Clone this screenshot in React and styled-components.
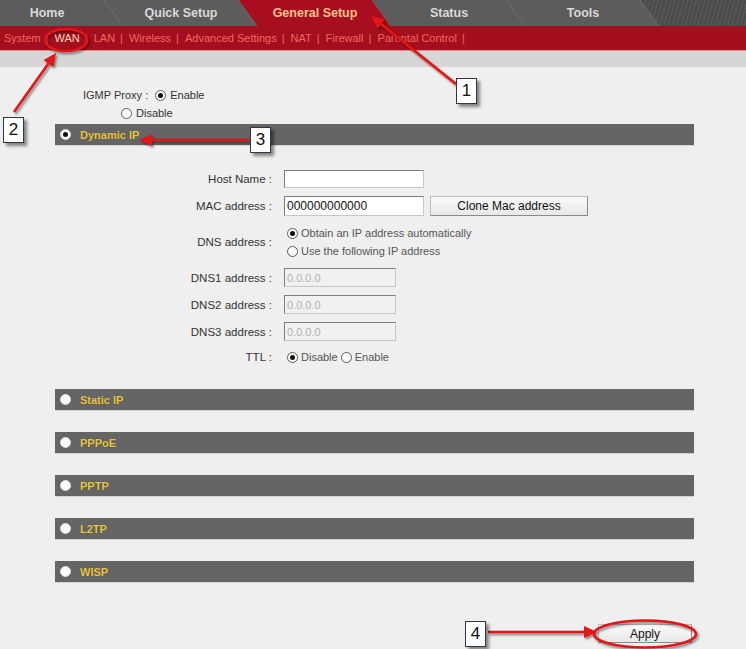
import React from "react";
import styled, { createGlobalStyle } from "styled-components";

const Global = createGlobalStyle`
  html, body { margin: 0; padding: 0; background: #efefef; }
  body { font-family: "Liberation Sans", Arial, sans-serif; }
  * { box-sizing: border-box; }
`;

const Page = styled.div`
  position: relative;
  width: 746px;
  height: 649px;
  overflow: hidden;
  background: #efefef;
  font-family: "Liberation Sans", Arial, sans-serif;
`;

const TabBar = styled.div`
  display: flex;
  height: 26px;
  background: #5c5c5c;
  overflow: hidden;
`;

const Tab = styled.div`
  position: relative;
  flex: none;
  width: 134px;
  margin-left: ${(p) => (p.$first ? "-20px" : "0")};
  display: flex;
  align-items: center;
  justify-content: center;
  font-size: 12.5px;
  font-weight: bold;
  color: ${(p) => (p.$active ? "#f4c48c" : "#d9d9d9")};
  &::before {
    content: "";
    position: absolute;
    inset: 0;
    background: ${(p) => (p.$active ? "#a90e20" : "transparent")};
    border-right: 1px solid #6e6e6e;
    transform: skewX(36deg);
  }
  span { position: relative; }
`;

const Filler = styled.div`
  position: relative;
  flex: 1;
  &::before {
    content: "";
    position: absolute;
    top: 0;
    bottom: 0;
    left: 0;
    right: -30px;
    transform: skewX(36deg);
    background: repeating-linear-gradient(135deg, #575757 0 1px, #4c4c4c 1px 3px);
  }
`;

const SubNav = styled.div`
  display: flex;
  align-items: center;
  height: 25px;
  padding-left: 4px;
  background: #a50e1f;
  border-bottom: 1px solid #e88a8a;
  font-size: 11px;
  color: #ee6a5c;
`;

const SubLink = styled.span`
  color: ${(p) => (p.$active ? "#ffd9b8" : "#ee6a5c")};
`;

const Sep = styled.span`
  padding: 0 6px 0 5px;
  color: #ee6a5c;
`;

const Band = styled.div`
  height: 16px;
  background: #d6d6d6;
`;

const Content = styled.div`
  padding-left: 55px;
  width: 694px;
`;

const Line = styled.div`
  display: flex;
  align-items: center;
  height: 18px;
  padding-left: ${(p) => p.$indent}px;
  font-size: 11px;
  color: #333;
  gap: 4px;
`;

const IgmpBlock = styled.div`
  padding-top: 19px;
  margin-bottom: 2px;
`;

const Label = styled.span`
  margin-right: 3px;
`;

const Radio = styled.span`
  flex: none;
  display: inline-flex;
  align-items: center;
  justify-content: center;
  width: 11px;
  height: 11px;
  border-radius: 50%;
  border: 1px solid ${(p) => (p.$plain ? "#dcdcdc" : "#5a5a5a")};
  background: #fff;
  &::after {
    content: "";
    width: 5px;
    height: 5px;
    border-radius: 50%;
    background: ${(p) => (p.$checked ? "#111" : "transparent")};
  }
`;

const Bar = styled.div`
  display: flex;
  align-items: center;
  gap: 9px;
  height: 22px;
  padding-left: 5px;
  background: #656565;
  border-bottom: 1px solid #d2d2d2;
  margin-top: ${(p) => p.$gap || 0}px;
`;

const BarTitle = styled.span`
  font-size: 11px;
  font-weight: bold;
  color: #e6c74a;
  text-shadow: 0 0 1px #4a4020;
`;

const Form = styled.div`
  display: grid;
  grid-template-columns: 217px 1fr;
  grid-template-rows: 18px 20px 36px 19px 19px 19px 16px;
  column-gap: 12px;
  row-gap: 8px;
  padding-top: 24px;
  font-size: 11px;
  color: #333;
`;

const FLabel = styled.div`
  display: flex;
  align-items: center;
  justify-content: flex-end;
  font-size: 11.5px;
`;

const Field = styled.div`
  display: flex;
  align-items: center;
  gap: 6px;
`;

const Stack = styled.div`
  display: flex;
  flex-direction: column;
  justify-content: center;
  gap: 6px;
  padding-left: 3px;
`;

const Opt = styled.div`
  display: flex;
  align-items: center;
  gap: 3px;
  font-size: 11px;
  color: #555;
`;

const Input = styled.div`
  width: ${(p) => p.$w}px;
  height: 100%;
  display: flex;
  align-items: center;
  padding-left: 2px;
  background: ${(p) => (p.$disabled ? "#f1f1f1" : "#fff")};
  border: 1px solid #c8c8c8;
  border-top-color: #7d7d7d;
  border-left-color: #7d7d7d;
  font-size: ${(p) => (p.$disabled ? "11px" : "12px")};
  color: ${(p) => (p.$disabled ? "#b0b0b0" : "#111")};
`;

const Button = styled.div`
  width: ${(p) => p.$w}px;
  height: ${(p) => p.$h}px;
  display: flex;
  align-items: center;
  justify-content: center;
  background: linear-gradient(#fafafa, #e8e8e8);
  border: 1px solid #bdbdbd;
  border-right-color: #8a8a8a;
  border-bottom-color: #8a8a8a;
  font-size: 12px;
  color: #111;
`;

const Footer = styled.div`
  display: flex;
  justify-content: flex-end;
  padding-right: 2px;
  margin-top: 41px;
`;

const Overlay = styled.svg`
  position: absolute;
  left: 0;
  top: 0;
  pointer-events: none;
`;

const Callout = styled.div`
  position: absolute;
  left: ${(p) => p.$x}px;
  top: ${(p) => p.$y}px;
  width: 21px;
  height: 26px;
  display: flex;
  align-items: center;
  justify-content: center;
  background: #fff;
  border: 1px solid #2c3a48;
  box-shadow: 3px 3px 3px rgba(0, 0, 0, 0.45);
  font-size: 17px;
  color: #111;
`;

const tabs = ["Home", "Quick Setup", "General Setup", "Status", "Tools"];
const links = ["System", "WAN", "LAN", "Wireless", "Advanced Settings", "NAT", "Firewall", "Parental Control"];
const others = ["Static IP", "PPPoE", "PPTP", "L2TP", "WISP"];

function Arrow({ x1, y1, x2, y2 }) {
  const dx = x2 - x1;
  const dy = y2 - y1;
  const len = Math.hypot(dx, dy);
  const ux = dx / len;
  const uy = dy / len;
  const hl = 13;
  const hw = 6;
  const bx = x2 - ux * hl;
  const by = y2 - uy * hl;
  const pts = `${x2},${y2} ${bx - uy * hw},${by + ux * hw} ${bx + uy * hw},${by - ux * hw}`;
  return (
    <g>
      <line x1={x1} y1={y1} x2={bx} y2={by} stroke="#e11414" strokeWidth="2.6" />
      <polygon points={pts} fill="#e11414" />
    </g>
  );
}

export default function App() {
  return (
    <Page>
      <Global />
      <TabBar>
        {tabs.map((t, i) => (
          <Tab key={t} $first={i === 0} $active={t === "General Setup"}>
            <span>{t}</span>
          </Tab>
        ))}
        <Filler />
      </TabBar>
      <SubNav>
        {links.map((l, i) => (
          <React.Fragment key={l}>
            <SubLink $active={l === "WAN"}>{l}</SubLink>
            <Sep>|</Sep>
          </React.Fragment>
        ))}
      </SubNav>
      <Band />
      <Content>
        <IgmpBlock>
          <Line $indent={28}>
            <Label>IGMP Proxy :</Label>
            <Radio $checked />
            <span>Enable</span>
          </Line>
          <Line $indent={66}>
            <Radio />
            <span>Disable</span>
          </Line>
        </IgmpBlock>
        <Bar>
          <Radio $checked $plain />
          <BarTitle>Dynamic IP</BarTitle>
        </Bar>
        <Form>
          <FLabel>Host Name :</FLabel>
          <Field>
            <Input $w={140} />
          </Field>
          <FLabel>MAC address :</FLabel>
          <Field>
            <Input $w={140}>000000000000</Input>
            <Button $w={158} $h={20}>Clone Mac address</Button>
          </Field>
          <FLabel>DNS address :</FLabel>
          <Stack>
            <Opt>
              <Radio $checked />
              Obtain an IP address automatically
            </Opt>
            <Opt>
              <Radio />
              Use the following IP address
            </Opt>
          </Stack>
          {["DNS1", "DNS2", "DNS3"].map((d) => (
            <React.Fragment key={d}>
              <FLabel>{d} address :</FLabel>
              <Field>
                <Input $w={112} $disabled>0.0.0.0</Input>
              </Field>
            </React.Fragment>
          ))}
          <FLabel>TTL :</FLabel>
          <Stack>
            <Opt>
              <Radio $checked />
              Disable
              <Radio />
              Enable
            </Opt>
          </Stack>
        </Form>
        {others.map((o, i) => (
          <Bar key={o} $gap={i === 0 ? 24 : 21}>
            <Radio $plain />
            <BarTitle>{o}</BarTitle>
          </Bar>
        ))}
        <Footer>
          <Button $w={94} $h={19}>Apply</Button>
        </Footer>
      </Content>
      <Overlay width="746" height="649" viewBox="0 0 746 649">
        <defs>
          <filter id="sh" x="-20%" y="-20%" width="140%" height="140%">
            <feDropShadow dx="1.5" dy="2" stdDeviation="1.2" floodColor="#000" floodOpacity="0.45" />
          </filter>
        </defs>
        <g filter="url(#sh)">
          <ellipse cx="66" cy="40" rx="21" ry="11" fill="none" stroke="#e11414" strokeWidth="2.6" />
          <ellipse cx="645" cy="634" rx="51" ry="13.5" fill="none" stroke="#e11414" strokeWidth="2.6" />
          <Arrow x1={456} y1={84} x2={371} y2={16} />
          <Arrow x1={14} y1={112} x2={56} y2={53} />
          <Arrow x1={249} y1={140} x2={139} y2={140} />
          <Arrow x1={488} y1={632} x2={597} y2={632} />
        </g>
      </Overlay>
      <Callout $x={456} $y={78}>1</Callout>
      <Callout $x={3} $y={117}>2</Callout>
      <Callout $x={250} $y={127}>3</Callout>
      <Callout $x={465} $y={621}>4</Callout>
    </Page>
  );
}
